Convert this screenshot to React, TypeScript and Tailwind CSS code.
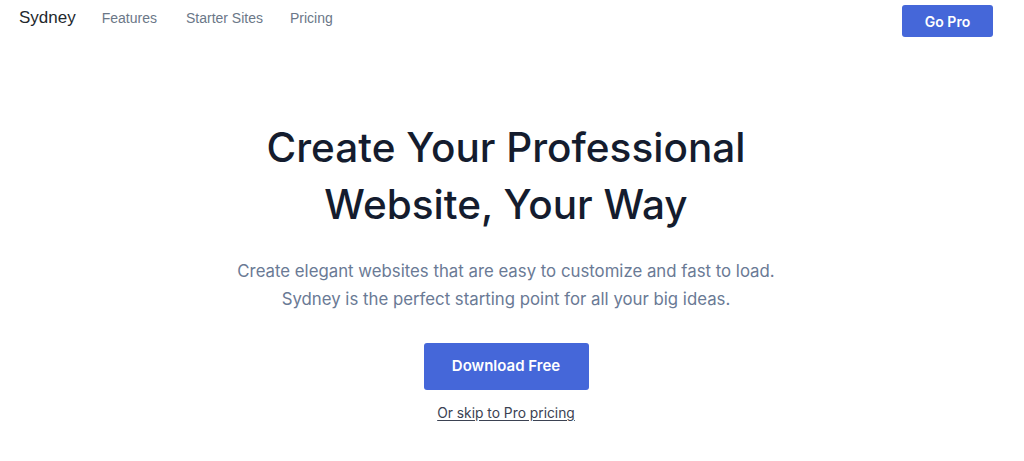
export default function App() {
  return (
    <div className="min-h-screen bg-white font-['Inter',sans-serif]">
      {/* top bar */}
      <header className="flex items-start justify-between pl-[19px] pr-[31px] pt-[5px]">
        <nav className="flex items-center pt-[1px] font-['Liberation_Sans',Arial,sans-serif]">
          <span className="text-[17px] leading-[24px] text-[#23282d]">Sydney</span>
          <a className="ml-[26px] text-[14px] text-[#6b7788]">Features</a>
          <a className="ml-[29px] text-[14px] text-[#6b7788]">Starter Sites</a>
          <a className="ml-[27px] text-[14px] text-[#6b7788]">Pricing</a>
        </nav>
        <button className="h-[32px] w-[91px] rounded-[3px] bg-[#4567d9] text-[14px] font-semibold text-white">
          Go Pro
        </button>
      </header>

      {/* hero */}
      <main className="flex flex-col items-center pr-[12px] pt-[82px] text-center">
        <h1 className="text-[40.5px] font-medium leading-[57px] text-[#141c2e]">
          Create Your Professional
          <br />
          Website, Your Way
        </h1>
        <p className="mt-[24px] text-[16.8px] leading-[28px] text-[#6a7a95]">
          Create elegant websites that are easy to customize and fast to load.
          <br />
          Sydney is the perfect starting point for all your big ideas.
        </p>
        <button className="mt-[30px] h-[47px] w-[165px] rounded-[3px] bg-[#4567d9] text-[15px] font-semibold text-white">
          Download Free
        </button>
        <a className="mt-[13px] text-[13.8px] text-[#3b4252] underline underline-offset-2">
          Or skip to Pro pricing
        </a>
      </main>
    </div>
  );
}
